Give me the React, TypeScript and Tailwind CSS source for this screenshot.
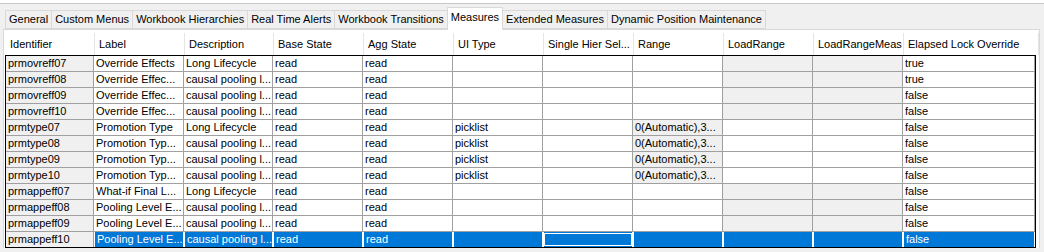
const tabs = [
  'General',
  'Custom Menus',
  'Workbook Hierarchies',
  'Real Time Alerts',
  'Workbook Transitions',
  'Measures',
  'Extended Measures',
  'Dynamic Position Maintenance',
];

const columns = [
  { title: 'Identifier', w: 'w-[89px]' },
  { title: 'Label', w: 'w-[90px]' },
  { title: 'Description', w: 'w-[89px]' },
  { title: 'Base State', w: 'w-[90px]' },
  { title: 'Agg State', w: 'w-[90px]' },
  { title: 'UI Type', w: 'w-[90px]' },
  { title: 'Single Hier Sel...', w: 'w-[90px]' },
  { title: 'Range', w: 'w-[90px]' },
  { title: 'LoadRange', w: 'w-[90px]' },
  { title: 'LoadRangeMeas', w: 'w-[90px]' },
  { title: 'Elapsed Lock Override', w: 'flex-1' },
];

type Row = {
  id: string;
  label: string;
  desc: string;
  ui: string;
  range: string;
  lock: string;
  picklist: boolean;
};

const rows: Row[] = [
  { id: 'prmovreff07', label: 'Override Effects', desc: 'Long Lifecycle', ui: '', range: '', lock: 'true', picklist: false },
  { id: 'prmovreff08', label: 'Override Effec...', desc: 'causal pooling l...', ui: '', range: '', lock: 'true', picklist: false },
  { id: 'prmovreff09', label: 'Override Effec...', desc: 'causal pooling l...', ui: '', range: '', lock: 'false', picklist: false },
  { id: 'prmovreff10', label: 'Override Effec...', desc: 'causal pooling l...', ui: '', range: '', lock: 'false', picklist: false },
  { id: 'prmtype07', label: 'Promotion Type', desc: 'Long Lifecycle', ui: 'picklist', range: '0(Automatic),3...', lock: 'false', picklist: true },
  { id: 'prmtype08', label: 'Promotion Typ...', desc: 'causal pooling l...', ui: 'picklist', range: '0(Automatic),3...', lock: 'false', picklist: true },
  { id: 'prmtype09', label: 'Promotion Typ...', desc: 'causal pooling l...', ui: 'picklist', range: '0(Automatic),3...', lock: 'false', picklist: true },
  { id: 'prmtype10', label: 'Promotion Typ...', desc: 'causal pooling l...', ui: 'picklist', range: '0(Automatic),3...', lock: 'false', picklist: true },
  { id: 'prmappeff07', label: 'What-if Final L...', desc: 'Long Lifecycle', ui: '', range: '', lock: 'false', picklist: false },
  { id: 'prmappeff08', label: 'Pooling Level E...', desc: 'causal pooling l...', ui: '', range: '', lock: 'false', picklist: false },
  { id: 'prmappeff09', label: 'Pooling Level E...', desc: 'causal pooling l...', ui: '', range: '', lock: 'false', picklist: false },
  { id: 'prmappeff10', label: 'Pooling Level E...', desc: 'causal pooling l...', ui: '', range: '', lock: 'false', picklist: false },
];

function Cell({
  w,
  text,
  grey,
  selected,
  focus,
}: {
  w: string;
  text: string;
  grey?: boolean;
  selected?: boolean;
  focus?: boolean;
}) {
  let cls = 'bg-white text-black border-[#a0a0a0]';
  if (grey) cls = 'bg-[#f0f0f0] text-black border-[#a0a0a0]';
  if (selected) cls = 'bg-[#0078d7] text-white border-white border-l';
  return (
    <div
      className={`${w} ${cls} h-[15px] shrink-0 border-r pl-[2px] leading-[15px] whitespace-nowrap overflow-hidden ${
        focus ? 'outline outline-1 -outline-offset-2 outline-white' : ''
      }`}
    >
      {text}
    </div>
  );
}

export default function App() {
  return (
    <div
      className="w-[1044px] h-[252px] overflow-hidden bg-[#f0f0f0] text-[11px] text-black"
      style={{ fontFamily: '"Liberation Sans", Arial, sans-serif' }}
    >
      <div className="h-[4px] bg-white border-b border-[#c8c8c8]" />
      <div className="flex items-end pl-[6px] h-[25px]">
        {tabs.map((t) => {
          const active = t === 'Measures';
          return (
            <div
              key={t}
              className={
                active
                  ? 'h-[23px] px-[3px] bg-white border border-b-0 border-[#d9d9d9] -ml-[1px] leading-[19px] -mb-[1px] relative z-10'
                  : 'h-[19px] px-[3px] bg-[#f0f0f0] border border-[#d9d9d9] -ml-[1px] leading-[17px]'
              }
            >
              {t}
            </div>
          );
        })}
      </div>
      <div className="ml-[3px] mr-[4px] bg-white border-l border-t border-r border-[#d9d9d9]">
        <div className="flex h-[25px] pt-[3px] pl-[2px]">
          {columns.map((c) => (
            <div
              key={c.title}
              className={`${c.w} shrink-0 border-r border-[#e5e5e5] pl-[4px] leading-[22px] whitespace-nowrap overflow-hidden`}
            >
              {c.title}
            </div>
          ))}
        </div>
        <div className="ml-[1px] mr-[3px] border border-black">
          {rows.map((r, i) => {
            const sel = i === rows.length - 1;
            return (
              <div key={r.id} className="flex border-b border-[#a0a0a0] last:border-b-0">
                <Cell w="w-[88px]" text={r.id} grey />
                <Cell w="w-[90px]" text={r.label} selected={sel} />
                <Cell w="w-[89px]" text={r.desc} selected={sel} />
                <Cell w="w-[90px]" text="read" selected={sel} />
                <Cell w="w-[90px]" text="read" selected={sel} />
                <Cell w="w-[90px]" text={r.ui} selected={sel} />
                <Cell w="w-[90px]" text="" selected={sel} focus={sel} />
                <Cell w="w-[90px]" text={r.range} grey={r.picklist} selected={sel} />
                <Cell w="w-[90px]" text="" grey={!r.picklist} selected={sel} />
                <Cell w="w-[90px]" text="" grey={!r.picklist} selected={sel} />
                <Cell w="flex-1" text={r.lock} selected={sel} />
              </div>
            );
          })}
        </div>
      </div>
    </div>
  );
}
